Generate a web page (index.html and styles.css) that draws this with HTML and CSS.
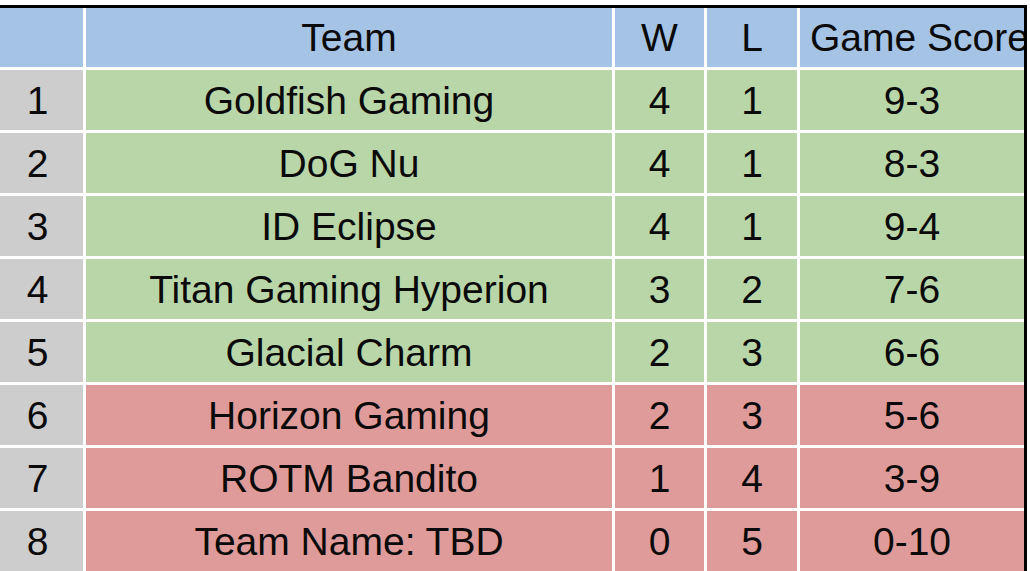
FILE: index.html
```html
<!DOCTYPE html>
<html>
<head>
<meta charset="utf-8">
<link rel="stylesheet" href="styles.css">
</head>
<body>
<div class="page">
  <div class="table">
    <div class="row head">
      <div class="cell"></div>
      <div class="cell">Team</div>
      <div class="cell">W</div>
      <div class="cell">L</div>
      <div class="cell score-h">Game Score</div>
    </div>
    <div class="row win"><div class="cell rank">1</div><div class="cell">Goldfish Gaming</div><div class="cell">4</div><div class="cell">1</div><div class="cell">9-3</div></div>
    <div class="row win"><div class="cell rank">2</div><div class="cell">DoG Nu</div><div class="cell">4</div><div class="cell">1</div><div class="cell">8-3</div></div>
    <div class="row win"><div class="cell rank">3</div><div class="cell">ID Eclipse</div><div class="cell">4</div><div class="cell">1</div><div class="cell">9-4</div></div>
    <div class="row win"><div class="cell rank">4</div><div class="cell">Titan Gaming Hyperion</div><div class="cell">3</div><div class="cell">2</div><div class="cell">7-6</div></div>
    <div class="row win"><div class="cell rank">5</div><div class="cell">Glacial Charm</div><div class="cell">2</div><div class="cell">3</div><div class="cell">6-6</div></div>
    <div class="row lose"><div class="cell rank">6</div><div class="cell">Horizon Gaming</div><div class="cell">2</div><div class="cell">3</div><div class="cell">5-6</div></div>
    <div class="row lose"><div class="cell rank">7</div><div class="cell">ROTM Bandito</div><div class="cell">1</div><div class="cell">4</div><div class="cell">3-9</div></div>
    <div class="row lose"><div class="cell rank">8</div><div class="cell">Team Name: TBD</div><div class="cell">0</div><div class="cell">5</div><div class="cell">0-10</div></div>
  </div>
</div>
</body>
</html>
```

FILE: styles.css
```css
html, body {
  margin: 0;
  padding: 0;
  background: #ffffff;
}
body {
  width: 1030px;
  height: 571px;
  overflow: hidden;
  font-family: "Liberation Sans", Arial, sans-serif;
  color: #0a0a0a;
}
.page {
  padding-top: 5px;
}
.table {
  width: 1024px;
  border-top: 3px solid #000;
  border-right: 3px solid #000;
  display: flex;
  flex-direction: column;
  gap: 3px;
  background: #ffffff;
}
.row {
  display: grid;
  grid-template-columns: 83px 526px 89px 90px 224px;
  column-gap: 3px;
  height: 60px;
}
.row.head {
  height: 59px;
}
.cell {
  display: flex;
  align-items: center;
  justify-content: center;
  font-size: 39px;
  line-height: 1;
  white-space: nowrap;
  overflow: hidden;
}
.head .cell {
  background: #a5c3e4;
}
.win .cell {
  background: #b9d6a9;
}
.lose .cell {
  background: #df9b99;
}
.row .cell.rank {
  background: #cdcdcd;
  padding-right: 8px;
}
.cell.score-h {
  justify-content: flex-start;
  padding-left: 10px;
}
```
